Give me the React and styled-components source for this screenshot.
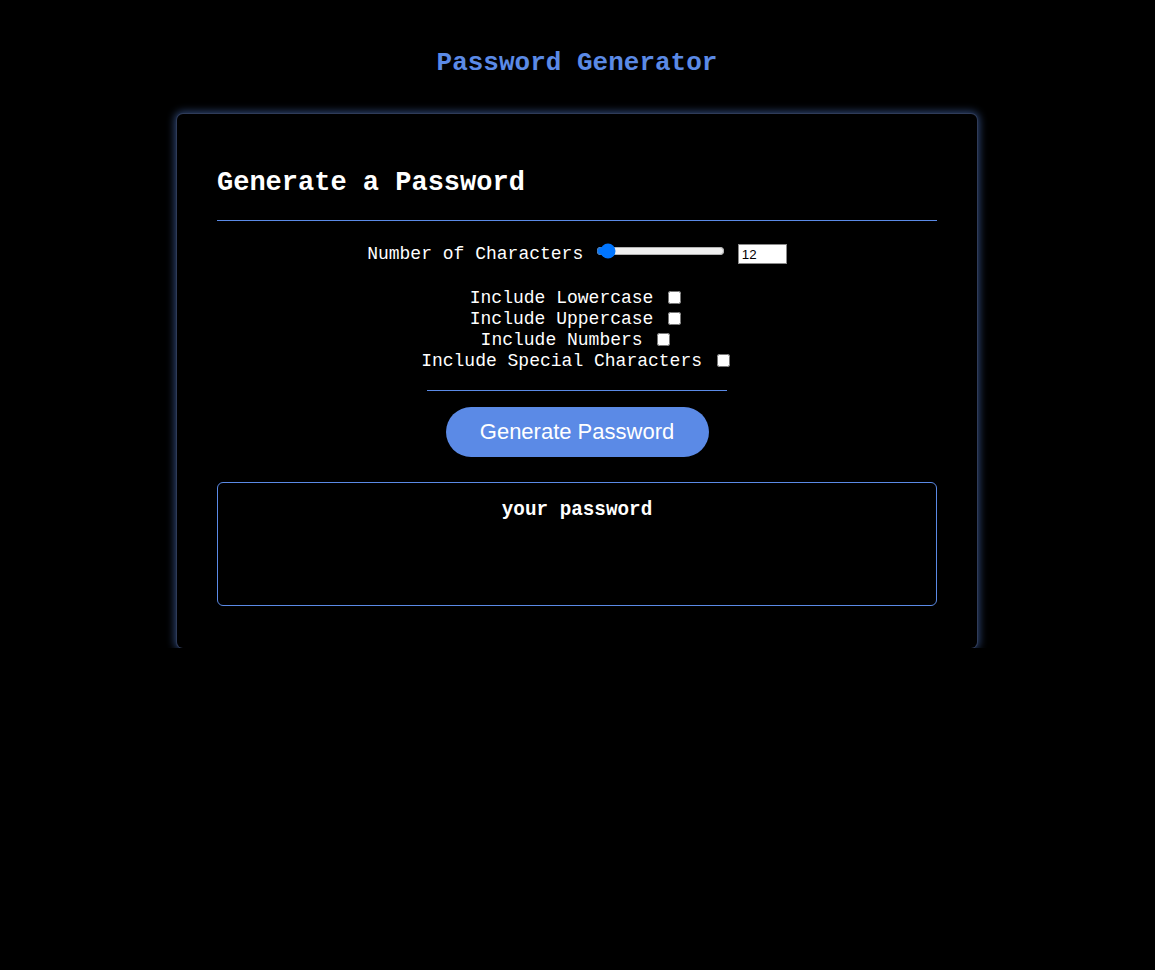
import React from "react";
import styled, { createGlobalStyle } from "styled-components";

const Global = createGlobalStyle`
  html, body {
    margin: 0;
    padding: 0;
    background: #000;
  }
  body {
    font-family: "Liberation Mono", "Courier New", monospace;
    color: #fff;
  }
`;

const Page = styled.div`
  padding-top: 48px;
  display: flex;
  flex-direction: column;
  align-items: center;
`;

const Title = styled.h1`
  margin: 0 1px 0 0;
  font-size: 26px;
  line-height: 30px;
  font-weight: 700;
  color: #5b8ae6;
`;

const Card = styled.section`
  box-sizing: border-box;
  width: 800px;
  margin: 36px 1px 0 0;
  padding: 40px 40px 42px;
  background: #000;
  border-radius: 6px;
  box-shadow: 0 0 0 1px #2f3b58, 0 0 8px 2px rgba(91, 138, 229, 0.55);
`;

const Heading = styled.h2`
  margin: 14px 0 0;
  font-size: 27px;
  line-height: 30px;
  font-weight: 700;
  color: #fff;
`;

const Divider = styled.div`
  height: 1px;
  background: #5b8ae6;
  margin: ${(p) => p.$mt}px auto 0;
  width: ${(p) => p.$w};
`;

const Row = styled.div`
  text-align: center;
  font-size: 18px;
  line-height: 21px;
  margin-top: ${(p) => p.$mt || 0}px;
  white-space: nowrap;
`;

const Range = styled.input`
  vertical-align: middle;
  width: 129px;
  margin: 0 2px;
  position: relative;
  top: -3px;
`;

const NumberBox = styled.input`
  box-sizing: border-box;
  vertical-align: middle;
  width: 49px;
  height: 20px;
  padding: 1px 3px;
  border: 1px solid #8a8a8a;
  border-radius: 0;
  background: #fff;
  color: #000;
  font-family: "Liberation Sans", Arial, sans-serif;
  font-size: 13.33px;
  &::-webkit-inner-spin-button {
    display: none;
  }
`;

const Checks = styled.div`
  margin-top: 23px;
  text-align: center;
`;

const Check = styled.input`
  vertical-align: middle;
  width: 13px;
  height: 13px;
  margin: 3px 3px 3px 4px;
  position: relative;
  top: -1px;
`;

const ButtonWrap = styled.div`
  display: flex;
  justify-content: center;
  margin-top: 16px;
`;

const Button = styled.button`
  width: 263px;
  height: 50px;
  border: 0;
  border-radius: 25px;
  background: #5b8ae6;
  color: #fff;
  font-family: "Liberation Sans", Arial, sans-serif;
  font-size: 22px;
  cursor: pointer;
`;

const Output = styled.div`
  box-sizing: border-box;
  margin-top: 25px;
  height: 124px;
  border: 1px solid #5b8ae6;
  border-radius: 6px;
  padding-top: 16px;
  text-align: center;
  font-size: 19.3px;
  line-height: 22px;
  font-weight: 700;
  color: #fff;
`;

export default function App() {
  const options = [
    "Include Lowercase",
    "Include Uppercase",
    "Include Numbers",
    "Include Special Characters",
  ];
  return (
    <>
      <Global />
      <Page>
        <Title>Password Generator</Title>
        <Card>
          <Heading>Generate a Password</Heading>
          <Divider $mt={22} $w="100%" />
          <Row $mt={23}>
            Number of Characters{" "}
            <Range type="range" min="8" max="128" defaultValue="12" />{" "}
            <NumberBox type="number" min="8" max="128" defaultValue="12" />
          </Row>
          <Checks>
            {options.map((o) => (
              <Row key={o}>
                {o} <Check type="checkbox" />
              </Row>
            ))}
          </Checks>
          <Divider $mt={18} $w="300px" />
          <ButtonWrap>
            <Button type="button">Generate Password</Button>
          </ButtonWrap>
          <Output>your password</Output>
        </Card>
      </Page>
    </>
  );
}
